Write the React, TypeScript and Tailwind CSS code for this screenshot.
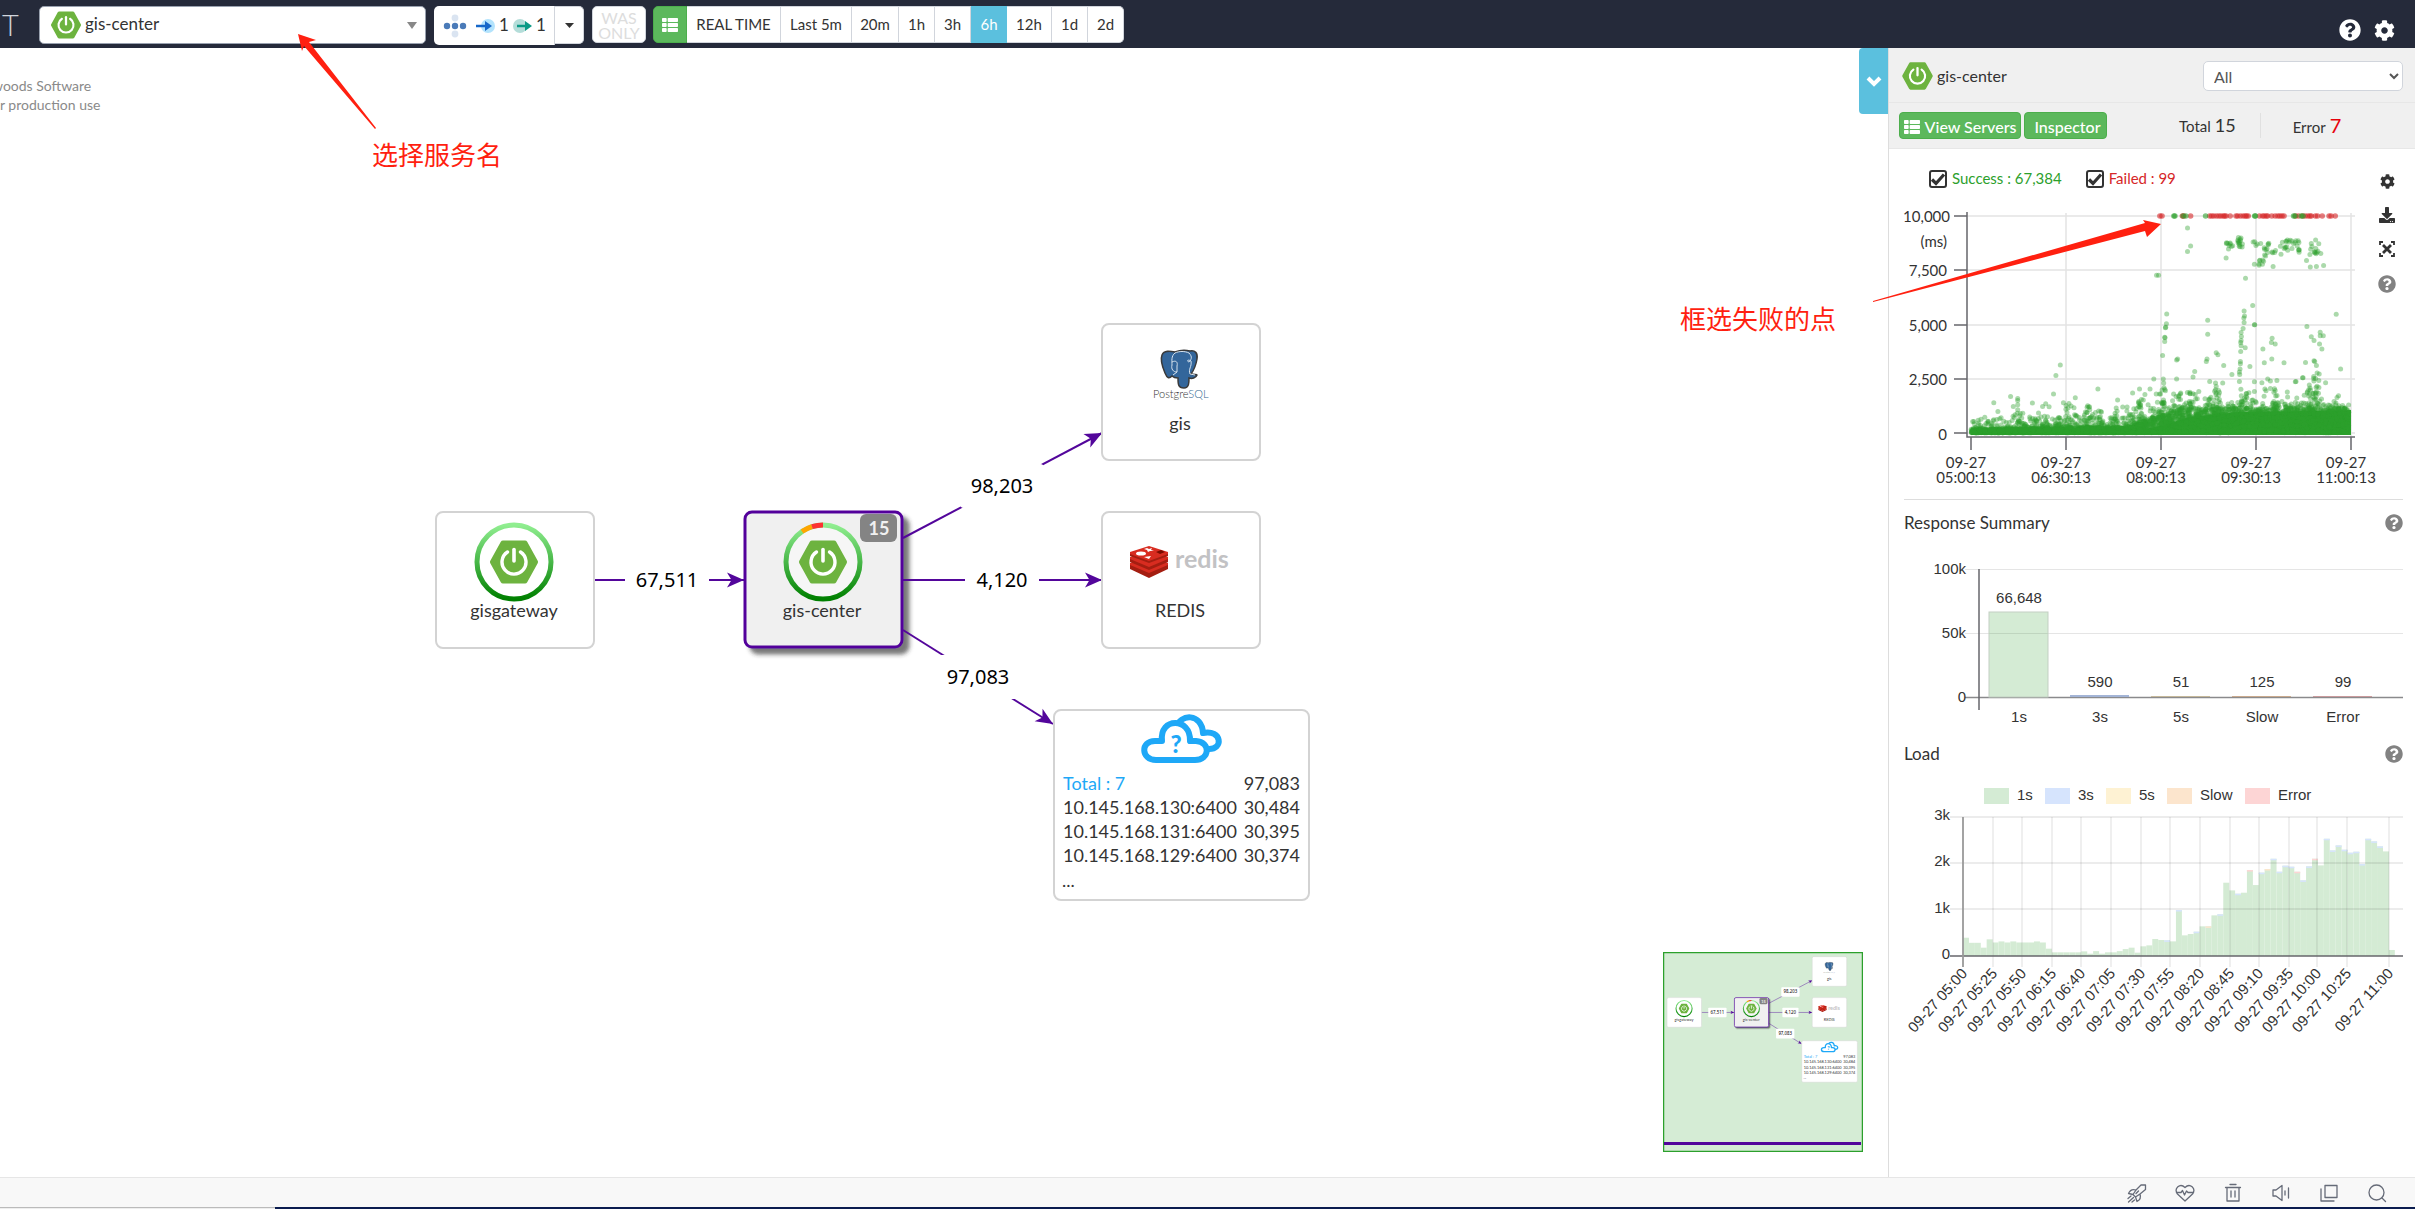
import React from "react";
import { FaQuestionCircle, FaCog, FaThList, FaDownload } from "react-icons/fa";

/* ---------- shared drawings ---------- */

const BootMark = ({ className }: { className?: string }) => (
  <svg viewBox="-24 -22 48 44" className={className} aria-hidden="true">
    <BootShape />
  </svg>
);

const BootShape = () => (
  <g>
    <path
      d="M-21.5 0 L-11 -19 H11 L21.5 0 L11 19 H-11 Z"
      fill="#6db33f"
      stroke="#6db33f"
      strokeWidth="5"
      strokeLinejoin="round"
    />
    <path
      d="M-6.5 -10 A12 12 0 1 0 6.5 -10"
      fill="none"
      stroke="#fff"
      strokeWidth="3.4"
      strokeLinecap="round"
    />
    <path d="M0 -12.5 V-1" stroke="#fff" strokeWidth="3.6" strokeLinecap="round" />
  </g>
);

const PURPLE = "#53069b";

const NodeBox = ({ x, y, w = 158, h = 136 }: { x: number; y: number; w?: number; h?: number }) => (
  <rect x={x} y={y} width={w} height={h} rx="7" fill="#fff" stroke="#d3d3d3" strokeWidth="2" />
);

const Ring = ({ x, y, alert = false }: { x: number; y: number; alert?: boolean }) => (
  <g transform={`translate(${x} ${y})`}>
    <circle r="37" fill={alert ? "#f6f6f6" : "#fff"} stroke="url(#ring)" strokeWidth="5" />
    {alert && (
      <>
        <path d="M-21 -30.5 A37 37 0 0 1 -11 -35.3" fill="none" stroke="#ffa500" strokeWidth="5" />
        <path d="M-11 -35.3 A37 37 0 0 1 0 -37" fill="none" stroke="#fc3232" strokeWidth="5" />
      </>
    )}
    <BootShape />
  </g>
);

const Arrow = ({ x, y, angle }: { x: number; y: number; angle: number }) => (
  <path
    d="M0 0 L-17 -7.5 L-12.5 0 L-17 7.5 Z"
    fill={PURPLE}
    transform={`translate(${x} ${y}) rotate(${angle})`}
  />
);

const LINKS = [
  { count: "67,511", x1: 594, y1: 580, x2: 744, y2: 580, tx: 667, ty: 580, angle: 0 },
  { count: "98,203", x1: 903, y1: 538, x2: 1102, y2: 433, tx: 1002, ty: 486, angle: -27 },
  { count: "4,120", x1: 903, y1: 580, x2: 1102, y2: 580, tx: 1002, ty: 580, angle: 0 },
  { count: "97,083", x1: 903, y1: 630, x2: 1053, y2: 724, tx: 978, ty: 677, angle: 32 },
];

const ROWS = [
  ["10.145.168.130:6400", "30,484"],
  ["10.145.168.131:6400", "30,395"],
  ["10.145.168.129:6400", "30,374"],
];

const PostgresLogo = () => (
  <g transform="translate(1160 350)">
    <path
      d="M2 5 C4 0 10 1 15 2 C20 0 26 0 30 1 C35 0 38 3 37 9 C36 15 34 20 31 24 C34 25 37 24 37 25 C36 28 32 29 29 28 C29 33 29 38 24 38 C18 38 18 34 18 28 C15 28 13 27 12 26 C9 29 7 28 5 23 C2 16 0 10 2 5Z"
      fill="#33669b"
      stroke="#3a3a3a"
      strokeWidth="1.5"
    />
    <path
      d="M15 3 C11 6 12 11 12 15 C11 19 13 22 17 22 L13 25 M12 12 C16 10 18 12 17 16 L17 22 M29 3 C33 7 31 10 29 12 C26 11 28 9 31 11 C32 17 28 19 30 24 L35 25 M15 3 C19 1 25 1 29 3"
      fill="none"
      stroke="#d7e3ee"
      strokeWidth="1"
    />
    <text x="-7" y="48" fontSize="11" fontFamily="Lato" fontWeight="300" fill="#333">
      Postgre<tspan fill="#336791">SQL</tspan>
    </text>
  </g>
);

const RedisLogo = () => (
  <g>
    <g transform="translate(1130 546)">
      <path d="M0 18 L19 26 L38 18 V23 L19 32 L0 23Z" fill="#a41e11" />
      <path d="M0 17 L19 9 L38 17 V19 L19 27 L0 19Z" fill="#d82c20" />
      <path d="M0 12 L19 20 L38 12 V16 L19 24 L0 16Z" fill="#a41e11" />
      <path d="M0 11 L19 4 L38 11 V13 L19 21 L0 13Z" fill="#d82c20" />
      <path d="M0 7 L19 14 L38 7 V10 L19 17 L0 10Z" fill="#a41e11" />
      <path d="M0 6 L19 0 L38 6 V8 L19 15 L0 8Z" fill="#d82c20" />
      <ellipse cx="11" cy="7.5" rx="5" ry="2" fill="#fff" />
      <path d="M17 2 l2 1 3 -1 -1 2 3 1 -4 0 -2 1 -1 -2 -3 -1z M14 11 l7 -1 -2 3z" fill="#fff" />
      <path d="M26 6 l5 -2 4 2 -5 2z" fill="#7a0c00" />
    </g>
    <text x="1175" y="568" fontSize="25" fontFamily="Lato" fontWeight="700" fill="#c2c2c4">
      redis
    </text>
  </g>
);

const Clouds = () => (
  <g fill="#fff" stroke="#1ea8f7" strokeWidth="6" strokeLinejoin="round">
    <path d="M1176 728 C1180 713 1202 713 1203 733 C1222 729 1224 750 1208 749 L1180 745Z" />
    <path d="M1156 760 C1141 760 1140 741 1155 741 H1162 C1159 717 1191 717 1190 741 H1196 C1211 742 1210 760 1195 760 Z" />
    <text
      x="1176"
      y="753"
      fontSize="24"
      fontFamily="Lato"
      fontWeight="900"
      textAnchor="middle"
      fill="#1ea8f7"
      stroke="none"
    >
      ?
    </text>
  </g>
);

const Topology = () => (
  <g>
    <defs>
      <linearGradient id="ring" x1="0" y1="0" x2="0" y2="1">
        <stop offset="0" stopColor="#90ee90" />
        <stop offset="1" stopColor="#008000" />
      </linearGradient>
      <filter id="lift" x="-10%" y="-10%" width="130%" height="130%">
        <feDropShadow dx="6" dy="6" stdDeviation="2" floodColor="#333" floodOpacity="0.65" />
      </filter>
    </defs>
    <rect
      x="745"
      y="512"
      width="157"
      height="135"
      rx="7"
      fill="#f0f0f0"
      stroke={PURPLE}
      strokeWidth="3"
      filter="url(#lift)"
    />
    {LINKS.map((l) => (
      <g key={l.count}>
        <path d={`M${l.x1} ${l.y1} L${l.x2} ${l.y2}`} stroke={PURPLE} strokeWidth="2" />
        <Arrow x={l.x2} y={l.y2} angle={l.angle} />
        <rect
          x={l.tx - (l.count.length > 5 ? 42 : 37)}
          y={l.ty - 22}
          width={l.count.length > 5 ? 84 : 74}
          height="44"
          rx="4"
          fill="#fff"
        />
        <text
          x={l.tx}
          y={l.ty + 7}
          fontSize="20"
          fontFamily="'Noto Sans'"
          textAnchor="middle"
          fill="#000"
        >
          {l.count}
        </text>
      </g>
    ))}
    <NodeBox x={436} y={512} />
    <Ring x={514} y={562} />
    <Ring x={823} y={562} alert />
    <rect x="860" y="514" width="37" height="28" rx="6" fill="#848484" />
    <NodeBox x={1102} y={324} />
    <NodeBox x={1102} y={512} />
    <NodeBox x={1054} y={710} w={255} h={190} />
    <PostgresLogo />
    <RedisLogo />
    <Clouds />
    <g fontSize="18" fontFamily="Lato" fill="#333" textAnchor="middle">
      <text x="514" y="617">gisgateway</text>
      <text x="822" y="617">gis-center</text>
      <text x="1180" y="430">gis</text>
      <text x="1180" y="617">REDIS</text>
      <text x="879" y="535" fontWeight="700" fill="#f0f0f0">15</text>
    </g>
    <g fontSize="18" fontFamily="Lato" fill="#333">
      <text x="1063" y="790" fill="#1ea8f7">Total : 7</text>
      <text x="1300" y="790" textAnchor="end">97,083</text>
      {ROWS.map(([host, n], i) => (
        <g key={host}>
          <text x="1063" y={814 + i * 24}>{host}</text>
          <text x="1300" y={814 + i * 24} textAnchor="end">{n}</text>
        </g>
      ))}
      <text x="1062" y="887">...</text>
    </g>
  </g>
);

/* ---------- charts ---------- */

const rng = (seed: number) => () => {
  seed = (seed * 1664525 + 1013904223) % 4294967296;
  return seed / 4294967296;
};

/* Individual slow calls, in plot units (1114 wide, 652 high, origin bottom left). */
const SLOW: number[][] = [
  [635, 616], [644, 562], [635, 545], [544, 474], [550, 474], [574, 358], [573, 328], [570, 316], [571, 318],
  [568, 288], [569, 286], [568, 275], [562, 233], [603, 219], [606, 222], [694, 339], [694, 297], [719, 241],
  [724, 235], [690, 215], [692, 222], [741, 203], [656, 185], [651, 168], [603, 162], [765, 176], [805, 465],
  [826, 383], [832, 325], [831, 325], [801, 367], [802, 352], [800, 346], [801, 332], [798, 314], [792, 302],
  [793, 290], [792, 278], [791, 272], [792, 262], [804, 256], [791, 245], [790, 215], [790, 208], [789, 192],
  [787, 183], [788, 176], [787, 155], [818, 200], [883, 285], [881, 272], [892, 267], [856, 252], [882, 222],
  [860, 211], [918, 211], [981, 212], [985, 320], [1071, 357], [1084, 192], [1024, 303], [998, 289], [1006, 278],
  [1024, 292], [1033, 292], [1022, 267], [1029, 252], [1006, 217], [1008, 215], [1013, 203], [1021, 177],
  [1015, 180], [1005, 170], [1020, 158], [1012, 137], [1040, 151], [972, 166], [974, 166], [951, 154], [953, 155],
  [249, 173], [262, 204], [116, 110], [67, 91], [79, 65], [124, 80], [137, 104], [137, 98], [137, 85], [137, 70],
  [180, 90], [210, 80], [219, 88], [229, 79], [242, 117], [306, 106], [287, 89], [302, 76], [271, 91], [372, 132],
  [430, 99], [474, 120], [494, 132], [510, 116], [525, 132], [536, 162], [564, 162], [565, 150], [566, 136],
  [570, 127], [594, 117], [614, 117], [615, 120], [668, 125], [651, 118], [700, 155], [717, 150], [719, 140],
  [717, 130], [726, 128], [738, 150], [831, 154], [831, 125], [853, 151], [862, 132], [870, 162], [878, 156],
  [897, 158], [878, 134], [890, 133], [892, 128], [1034, 503], [1013, 500], [995, 499],
  [886, 500], [831, 507], [748, 526], [984, 518], [864, 532], [909, 537], [893, 548],
];

/* [centre x, centre y, half width, half height, count] */
const CLUSTERS: number[][] = [
  [758, 562, 10, 10, 9], [790, 572, 9, 16, 14], [836, 568, 18, 7, 5], [868, 555, 11, 20, 8], [850, 512, 9, 9, 7],
  [925, 566, 22, 20, 14], [954, 560, 9, 18, 10], [1011, 558, 18, 22, 14], [878, 544, 18, 6, 4],
];

const COLUMNS: number[][] = [
  [700, 110, 12], [712, 130, 14], [722, 125, 14], [802, 120, 16], [858, 130, 10], [890, 130, 16], [980, 120, 14],
  [994, 150, 24], [1012, 165, 26], [340, 82, 18], [492, 105, 22], [285, 85, 12], [137, 60, 10], [372, 70, 8],
  [430, 95, 8], [560, 150, 20], [650, 125, 16],
];

const scatterDots = (() => {
  const r = rng(7);
  const out: number[][] = [...SLOW];
  CLUSTERS.forEach(([cx, cy, hx, hy, n]) => {
    for (let i = 0; i < n; i++) out.push([cx + (r() - 0.5) * 2 * hx, cy + (r() - 0.5) * 2 * hy]);
  });
  for (let i = 0; i < 3200; i++) {
    const x = r() * 1108;
    const t = x < 450 ? 0 : x < 620 ? (x - 450) / 170 : 1;
    const early = x < 450 ? x / 450 : 1;
    const base = 10 + early * 8 + t * 58;
    const u = Math.pow(r(), 10);
    out.push([x, r() * base + u * (35 + early * 35)]);
  }
  COLUMNS.forEach(([cx, top, n]) => {
    for (let i = 0; i < n; i++) out.push([cx + (r() - 0.5) * 18, r() * top]);
  });
  return out;
})();

const FAILED = [
  554, 560, 620, 624, 644, 700, 706, 712, 720, 727, 733, 740, 744, 748, 760, 777, 782, 790, 798, 804, 808, 813, 846,
  855, 860, 866, 870, 882, 892, 900, 906, 912, 918, 952, 960, 972, 980, 988, 994, 998, 1010, 1016, 1030, 1050, 1056,
  1068,
];
const TOP_OK = [595, 598, 622, 630, 688, 832, 834, 946, 950, 968, 974];

const sx = (v: number) => Math.round((82 + v * 0.341) * 10) / 10;
const sy = (v: number) => Math.round((233 - v * 0.3328) * 10) / 10;

const ScatterChart = () => (
  <svg width="490" height="299" className="block" role="img" aria-label="Response time scatter">
    <g stroke="#e3e3e3" strokeWidth="1.5">
      {[16, 70, 125, 179, 233].map((y) => (
        <path key={y} d={`M78 ${y} H466`} />
      ))}
      {[177, 272, 367, 462].map((x) => (
        <path key={x} d={`M${x} 13 V237`} />
      ))}
    </g>
    <path d="M82 235 V231 L250 230 L275 225 L300 217 L350 212 L462 210 V235 Z" fill="#2ca02c" />
    <g fill="#2ca02c" fillOpacity="0.4">
      {scatterDots.map(([x, y], i) => (
        <circle key={i} cx={sx(x)} cy={sy(y)} r="2.5" />
      ))}
    </g>
    <g fill="#d62728" fillOpacity="0.6">
      {FAILED.map((x) => (
        <circle key={x} cx={sx(x)} cy="16" r="2.8" />
      ))}
    </g>
    <g fill="#2ca02c" fillOpacity="0.6">
      {TOP_OK.map((x) => (
        <circle key={x} cx={sx(x)} cy="16" r="2.8" />
      ))}
    </g>
    <g stroke="#66666b" strokeWidth="1.5" fill="none">
      <path d="M78 12 V237 H466" />
      {[16, 70, 125, 179, 233].map((y) => (
        <path key={y} d={`M65 ${y} H78`} />
      ))}
      {[82, 177, 272, 367, 462].map((x) => (
        <path key={x} d={`M${x} 237 V250`} />
      ))}
    </g>
    <g fontSize="15" fontFamily="Lato" fill="#333" textAnchor="end">
      <text x="61" y="22">10,000</text>
      <text x="58" y="47">(ms)</text>
      <text x="58" y="76">7,500</text>
      <text x="58" y="131">5,000</text>
      <text x="58" y="185">2,500</text>
      <text x="58" y="240">0</text>
    </g>
    <g fontSize="15" fontFamily="Lato" fill="#333" textAnchor="middle">
      {["05:00:13", "06:30:13", "08:00:13", "09:30:13", "11:00:13"].map((t, i) => (
        <React.Fragment key={t}>
          <text x={77 + i * 95} y="268">09-27</text>
          <text x={77 + i * 95} y="283">{t}</text>
        </React.Fragment>
      ))}
    </g>
  </svg>
);

const SUMMARY = [
  { label: "1s", value: "66,648", h: 85, fill: "#d4ebd4", vy: 57 },
  { label: "3s", value: "590", h: 2, fill: "#a3b4d6", vy: 141 },
  { label: "5s", value: "51", h: 1, fill: "#c5b89a", vy: 141 },
  { label: "Slow", value: "125", h: 1, fill: "#c9a98d", vy: 141 },
  { label: "Error", value: "99", h: 1, fill: "#c99a9c", vy: 141 },
];

const SummaryChart = () => (
  <svg width="499" height="185" className="block" role="img" aria-label="Response summary">
    <g stroke="#e5e5e5" strokeWidth="1">
      <path d="M61 23.5 H499" />
      <path d="M61 87.5 H499" />
    </g>
    <path d="M61 151.5 H499" stroke="#8a8a8c" strokeWidth="1.5" />
    {SUMMARY.map((b, i) => (
      <rect
        key={b.label}
        x={85 + i * 81}
        y={151 - b.h}
        width="59"
        height={b.h}
        fill={b.fill}
        stroke={i === 0 ? "#c3cfc3" : "none"}
      />
    ))}
    <path d="M85 87.5 H144" stroke="#bfd5bf" strokeWidth="1" />
    <path d="M75 23 V164" stroke="#66666b" strokeWidth="1.5" />
    <g fontSize="15" fontFamily="'Liberation Sans'" fill="#333">
      <g textAnchor="end">
        <text x="62" y="28">100k</text>
        <text x="62" y="92">50k</text>
        <text x="62" y="156">0</text>
      </g>
      <g textAnchor="middle">
        {SUMMARY.map((b, i) => (
          <React.Fragment key={b.label}>
            <text x={115 + i * 81} y={b.vy}>{b.value}</text>
            <text x={115 + i * 81} y="176">{b.label}</text>
          </React.Fragment>
        ))}
      </g>
    </g>
  </svg>
);

const LOAD = [
  395, 285, 285, 180, 360, 292, 315, 292, 315, 292, 292, 292, 315, 292, 158, 79, 79, 79, 79, 79, 100, 50, 105, 50, 79,
  79, 105, 150, 180, 72, 209, 230, 367, 345, 338, 316, 993, 446, 475, 525, 640, 640, 878, 900, 1583, 1417, 1345, 1367,
  1856, 1532, 1800, 1878, 2100, 1820, 1950, 1928, 1820, 1633, 1935, 2100, 1957, 2532, 2280, 2388, 2295, 2230, 2252,
  1986, 2532, 2475, 2367, 2259, 130,
];
const CAP: Record<number, string> = {
  34: "#d6e4fd", 36: "#d6e4fd", 39: "#d6e4fd", 41: "#fce5cd", 43: "#d6e4fd", 46: "#d6e4fd", 48: "#fdd5d5",
  50: "#d6e4fd", 51: "#fce5cd", 52: "#d6e4fd", 53: "#d6e4fd", 54: "#d6e4fd", 55: "#d6e4fd", 56: "#fdd5d5",
  57: "#d6e4fd", 58: "#d6e4fd", 59: "#fdd5d5", 61: "#d6e4fd", 62: "#d6e4fd", 63: "#d6e4fd", 64: "#d6e4fd",
  65: "#d6e4fd", 66: "#d6e4fd", 67: "#d6e4fd", 68: "#d6e4fd", 69: "#d6e4fd", 70: "#d6e4fd",
};
const TIMES: [string, number][] = [
  ["05:00", 59], ["05:25", 89], ["05:50", 118], ["06:15", 148], ["06:40", 177], ["07:05", 207], ["07:30", 237],
  ["07:55", 266], ["08:20", 296], ["08:45", 326], ["09:10", 355], ["09:35", 385], ["10:00", 413], ["10:25", 443],
  ["11:00", 485],
];
const LEGEND: [string, string, number][] = [
  ["1s", "#d4ebd4", 80], ["3s", "#d6e4fd", 141], ["5s", "#fef2d3", 202], ["Slow", "#fce5cd", 263],
  ["Error", "#fdd5d5", 341],
];

const LoadChart = () => (
  <svg width="499" height="270" className="block" role="img" aria-label="Load">
    <g fontSize="15" fontFamily="'Liberation Sans'" fill="#333">
      {LEGEND.map(([t, c, x]) => (
        <g key={t}>
          <rect x={x} y="11" width="25" height="16" fill={c} />
          <text x={x + 33} y="23">{t}</text>
        </g>
      ))}
    </g>
    {LOAD.map((v, i) => {
      const x = 59 + i * 5.915;
      const h = (v / 1000) * 46.3;
      return (
        <React.Fragment key={i}>
          <rect x={x} y={179 - h} width="5.95" height={h} fill="#d4ebd4" />
          {CAP[i] && <rect x={x} y={179 - h} width="5.95" height="1.5" fill={CAP[i]} />}
        </React.Fragment>
      );
    })}
    <g stroke="#000" strokeOpacity="0.1" strokeWidth="1.3">
      {[40, 86, 132].map((y) => (
        <path key={y} d={`M46 ${y} H499`} />
      ))}
      {TIMES.slice(1).map(([t, x]) => (
        <path key={t} d={`M${x} 40 V190`} />
      ))}
    </g>
    <path d="M46 179 H499" stroke="#66666b" strokeWidth="1.3" />
    <path d="M59 40 V190" stroke="#999" strokeWidth="1.8" />
    <g fontSize="15" fontFamily="'Liberation Sans'" fill="#333" textAnchor="end">
      <text x="46" y="43">3k</text>
      <text x="46" y="89">2k</text>
      <text x="46" y="136">1k</text>
      <text x="46" y="182">0</text>
      {TIMES.map(([t, x]) => (
        <text key={t} transform={`translate(${x + 5} 197) rotate(-48)`}>
          {`09-27 ${t}`}
        </text>
      ))}
    </g>
  </svg>
);

/* ---------- page ---------- */

const RANGES = ["Last 5m", "20m", "1h", "3h", "6h", "12h", "1d", "2d"];
const RANGE_W = ["w-[71px]", "w-[47px]", "w-9", "w-9", "w-9", "w-[45px]", "w-9", "w-9"];

const Header = () => (
  <header className="flex h-12 shrink-0 items-start bg-[#252a3a] pt-[6px] text-base text-[#333]">
    <span className="ml-[2px] w-[37px] text-[29px] leading-[38px] font-light text-gray-300">T</span>
    <label className="relative flex h-[38px] w-[387px] items-center rounded-[5px] border border-gray-400 bg-white">
      <BootMark className="absolute left-[11px] h-7 w-[30px]" />
      <select
        aria-label="Application"
        className="h-full w-full appearance-none bg-transparent pb-[2px] pl-[45px] text-[17px] leading-6 outline-none"
      >
        <option>gis-center</option>
      </select>
      <svg className="absolute right-2 h-[7px] w-[10px]" viewBox="0 0 10 7">
        <path d="M0 0H10L5 7Z" fill="#888" />
      </svg>
    </label>
    <div className="ml-[8px] flex">
      <button
        aria-label="Inbound 1, outbound 1"
        className="flex h-[39px] w-[121px] items-center rounded-l-[5px] border-r border-gray-300 bg-white pl-2"
      >
        <svg width="110" height="30" viewBox="0 0 110 30" className="shrink-0">
          <g fill="#dae4f1">
            <circle cx="13" cy="7" r="3.400" />
            <circle cx="13" cy="23" r="3.400" />
          </g>
          <g fill="#4a7ab8">
            <circle cx="5" cy="15" r="3.200" />
            <circle cx="13" cy="15" r="3.200" />
            <circle cx="21" cy="15" r="3.200" />
          </g>
          <circle cx="46" cy="15" r="7" fill="#b3e3fc" />
          <path d="M34 15H46" stroke="#1667c9" strokeWidth="2.500" />
          <path d="M43 10L50 15L43 20Z" fill="#1667c9" />
          <text x="57" y="20" fontSize="17" fontFamily="Lato" fill="#333">1</text>
          <circle cx="78" cy="15" r="7" fill="#b4ddd9" />
          <path d="M75 15H86" stroke="#0a9a86" strokeWidth="2.500" />
          <path d="M83 10L90 15L83 20Z" fill="#0a9a86" />
          <text x="94" y="20" fontSize="17" fontFamily="Lato" fill="#333">1</text>
        </svg>
      </button>
      <button
        aria-label="More"
        className="flex h-[38px] w-[29px] items-center justify-center rounded-r-[5px] border border-l-0 border-gray-300 bg-white"
      >
        <svg className="h-[5px] w-[9px]" viewBox="0 0 9 5">
          <path d="M0 0H9L4.500 5Z" fill="#333" />
        </svg>
      </button>
    </div>
    <button className="ml-[8px] h-[37px] w-[54px] rounded-[5px] border border-gray-300 bg-white text-base leading-[15px] text-[#ddd]">
      WAS
      <br />
      ONLY
    </button>
    <div className="ml-[7px] flex h-[37px]">
      <button
        aria-label="Time range"
        className="flex w-[34px] items-center justify-center rounded-l-[5px] border border-[#4cae4c] bg-[#5cb85c] text-white"
      >
        <FaThList className="size-4" />
      </button>
      <button className="w-[94px] border border-l-0 border-gray-300 bg-white text-[15px]">REAL TIME</button>
      {RANGES.map((r, i) => (
        <button
          key={r}
          className={`${RANGE_W[i]} border text-[15px] last:rounded-r-[5px] ${
            r === "6h" ? "border-[#5bc0de] bg-[#5bc0de] text-white" : "border-l-0 border-gray-300 bg-white"
          }`}
        >
          {r}
        </button>
      ))}
    </div>
    <div className="mt-[13px] mr-5 ml-auto flex items-center gap-[13px] text-white">
      <button aria-label="Help">
        <FaQuestionCircle className="size-[22px]" />
      </button>
      <button aria-label="Settings">
        <FaCog className="size-[21px]" />
      </button>
    </div>
  </header>
);

const HelpDot = () => (
  <button aria-label="Help" className="text-[#828282]">
    <FaQuestionCircle className="size-[18px]" />
  </button>
);

const Check = ({ label, color }: { label: string; color: string }) => (
  <label className={`flex items-center gap-[5px] text-[15px] ${color}`}>
    <span className="relative size-[18px]">
      <input
        type="checkbox"
        defaultChecked
        className="peer block size-[18px] appearance-none rounded-[3px] border-2 border-[#333] bg-white"
      />
      <svg viewBox="0 0 18 18" className="pointer-events-none absolute inset-0 hidden peer-checked:block">
        <path d="M3 9.500L7 13.500L15 4.500" fill="none" stroke="#333" strokeWidth="3.200" />
      </svg>
    </span>
    {label}
  </label>
);

const SidePanel = () => (
  <aside className="flex w-[527px] shrink-0 flex-col border-l border-[#ddd] bg-white">
    <div className="flex h-[55px] items-center border-b border-[#e7e7e7] bg-[#f0f0f0] pt-[2px] pr-3 pl-[13px]">
      <BootMark className="h-7 w-[31px]" />
      <h2 className="ml-1 text-base">gis-center</h2>
      <select
        aria-label="Server"
        className="ml-auto h-[30px] w-[200px] rounded-[5px] border border-gray-300 bg-white px-[6px] text-base text-[#555]"
      >
        <option>All</option>
      </select>
    </div>
    <div className="flex h-[46px] items-center border-b border-[#e7e7e7] bg-[#f0f0f0] pl-[10px]">
      <button className="flex h-[27px] w-[122px] items-center justify-center gap-[5px] rounded border border-[#4cae4c] bg-[#5cb85c] pt-[2px] text-base font-medium text-white">
        <FaThList className="size-4" />
        View Servers
      </button>
      <button className="ml-[3px] flex h-[27px] w-[83px] items-center justify-center rounded border border-[#4cae4c] bg-[#5cb85c] pt-[2px] pl-[4px] text-base font-medium text-white">
        Inspector
      </button>
      <p className="ml-[72px] flex items-baseline gap-1 text-[15px] leading-6">
        Total <span className="text-lg leading-6">15</span>
      </p>
      <span className="ml-[24px] h-[25px] w-px bg-[#e0e0e0]" />
      <p className="ml-[32px] flex items-baseline gap-1 text-[15px] leading-6">
        Error <span className="text-xl leading-6 text-red-600">7</span>
      </p>
    </div>
    <div className="flex">
      <div>
        <div className="flex h-[51px] items-center gap-[24px] pt-[8px] pl-[40px]">
          <Check label="Success : 67,384" color="text-[#2ca02c]" />
          <Check label="Failed : 99" color="text-[#d62728]" />
        </div>
        <ScatterChart />
      </div>
      <div className="flex w-4 flex-col items-center gap-[18px] pt-[25px] text-[#333]">
        <button aria-label="Chart settings">
          <FaCog className="size-[15px]" />
        </button>
        <button aria-label="Download">
          <FaDownload className="size-4" />
        </button>
        <button aria-label="Full screen">
          <svg viewBox="0 0 16 16" className="size-4" fill="none" stroke="#333" strokeWidth="1.800">
            <path d="M1 4V1H4M12 1H15V4M15 12V15H12M4 15H1V12" />
            <path d="M4 4L12 12M12 4L4 12" strokeWidth="2.800" />
          </svg>
        </button>
        <HelpDot />
      </div>
    </div>
    <section className="mr-3 ml-[15px] border-t border-[#ddd]">
      <div className="flex h-[46px] items-center justify-between">
        <h3 className="text-[17px] leading-6">Response Summary</h3>
        <HelpDot />
      </div>
      <SummaryChart />
      <div className="flex h-[46px] items-center justify-between">
        <h3 className="text-[17px] leading-6">Load</h3>
        <HelpDot />
      </div>
      <LoadChart />
    </section>
  </aside>
);

const FooterIcon = ({ label, children }: { label: string; children: React.ReactNode }) => (
  <button aria-label={label}>
    <svg
      viewBox="0 0 20 20"
      className="size-5"
      fill="none"
      stroke="#666b78"
      strokeWidth="1.300"
      strokeLinecap="round"
      strokeLinejoin="round"
    >
      {children}
    </svg>
  </button>
);

const Footer = () => (
  <footer className="shrink-0">
    <div className="flex h-[30px] items-center justify-end gap-[28px] border-t border-[#e6e6e6] bg-[#f8f8f8] pt-px pr-[28px]">
      <FooterIcon label="Boost">
        <path d="M9 7L14 2H18.500V6.500L13 11M9 7C6 6 3 7 1.500 10.500L6 11.500M13 11C14 14 13 17 10 18.500L8.500 14M9 7L6 11.500L8.500 14L13 11M9 10.500L11.500 8M1 15.500L4 13M1.500 19L6.500 14.500M5 19L7.500 17" />
      </FooterIcon>
      <FooterIcon label="Health">
        <path d="M10 18L2.500 11C-1.500 5.500 5 -.5 10 4.500C15 -.5 21.500 5.500 17.500 11Z" />
        <path d="M1.500 9.500H6L7.500 7.500L9.500 12L11.500 8L13 9.500H18.500" />
      </FooterIcon>
      <FooterIcon label="Trash">
        <path d="M2.500 4.500H17.500M7 1.500H13M4 4.500V18H16V4.500M8 8V14M12 8V14" />
      </FooterIcon>
      <FooterIcon label="Sound">
        <path d="M2 7H5L11 2.500V17.500L5 13H2ZM14 8V12M17.500 5V15" />
      </FooterIcon>
      <FooterIcon label="Windows">
        <path d="M6 2.500H18V14.500H6ZM2 6V18H15" />
      </FooterIcon>
      <FooterIcon label="Search">
        <circle cx="9.500" cy="9.500" r="7.500" />
        <path d="M15 15L18.500 18.500" />
      </FooterIcon>
    </div>
    <div className="flex h-[2px] bg-[#0b1c4f]">
      <span className="w-[275px] border-t border-[#bbb] bg-[#eee]" />
    </div>
  </footer>
);

const Minimap = () => (
  <svg width="200" height="200" className="absolute right-[25px] bottom-[25px]" aria-hidden="true">
    <rect x="0.500" y="0.500" width="199" height="199" fill="#d5ecd5" stroke="#2ca02c" strokeWidth="1.500" />
    <g transform="translate(-91 -66) scale(0.218)">
      <Topology />
    </g>
    <rect x="1" y="190" width="197" height="3" fill={PURPLE} />
  </svg>
);

const ARROW_FILL = "#ff2010";

const Annotations = () => (
  <>
    <svg className="pointer-events-none absolute inset-0 h-full w-full" aria-hidden="true">
      <path d="M298 34L316 40L309 42L376 128L375 129L304 46L302 51Z" fill={ARROW_FILL} />
    </svg>
    <svg
      className="pointer-events-none absolute top-[210px] right-[250px]"
      width="295"
      height="95"
      aria-hidden="true"
    >
      <path d="M291 14L273 10L275 13L3 91L3 92L275 21L277 27Z" fill={ARROW_FILL} />
    </svg>
    <p className="absolute top-[137px] left-[372px] text-[26px] leading-9 text-[#ff1f10]">选择服务名</p>
    <p className="absolute top-[301px] right-[579px] text-[26px] leading-9 text-[#ff1f10]">框选失败的点</p>
  </>
);

export default function App() {
  return (
    <div className="relative flex h-screen flex-col overflow-hidden bg-white font-[Lato,'Noto_Sans_CJK_SC',sans-serif] text-[#333]">
      <Header />
      <div className="flex min-h-0 flex-1">
        <main className="relative min-w-0 flex-1">
          <svg className="block h-full w-full" role="img" aria-label="Server map">
            <g transform="translate(0 -48)">
              <Topology />
            </g>
          </svg>
          <p className="absolute top-[28px] left-[-8px] text-sm leading-[19px] whitespace-pre text-[#8a8a8a]">
            {"woods Software\nor production use"}
          </p>
          <button
            aria-label="Collapse panel"
            className="absolute top-0 right-0 flex h-[66px] w-[29px] items-center justify-center rounded-l bg-[#5bc0de]"
          >
            <svg viewBox="0 0 16 11" className="h-[11px] w-4" fill="none" stroke="#fff" strokeWidth="4">
              <path d="M2 2L8 8L14 2" />
            </svg>
          </button>
          <Minimap />
        </main>
        <SidePanel />
      </div>
      <Footer />
      <Annotations />
    </div>
  );
}
